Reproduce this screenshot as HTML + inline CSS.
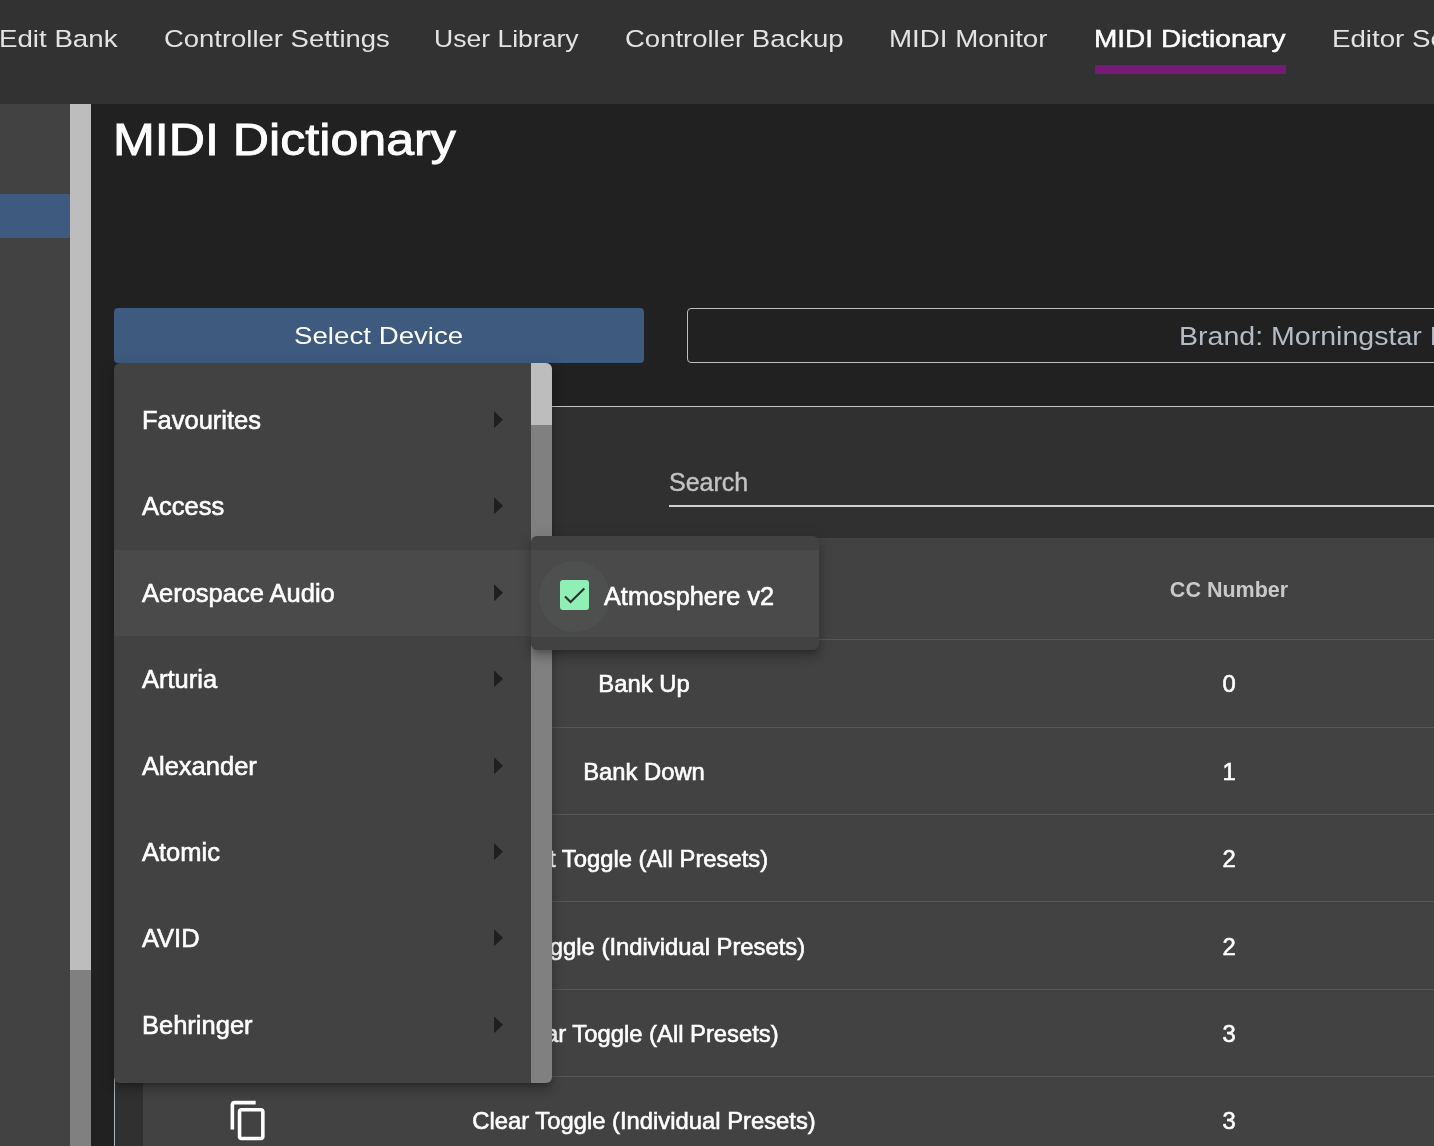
<!DOCTYPE html>
<html><head><meta charset="utf-8">
<style>
*{box-sizing:border-box;margin:0;padding:0}
html,body{width:1434px;height:1146px;overflow:hidden;background:#212121;font-family:"Liberation Sans",sans-serif;}
.abs{position:absolute}
.t{position:absolute;white-space:nowrap;line-height:normal;transform-origin:0 0;will-change:transform}
#nav{position:absolute;left:0;top:0;width:1434px;height:104px;background:#323232}
.nv{font-size:24.5px;color:#e3e3e3}
#side{position:absolute;left:0;top:104px;width:70px;height:1042px;background:#424242}
#sb1{position:absolute;left:70px;top:104px;width:21px;height:866px;background:#bdbdbd}
#sb2{position:absolute;left:70px;top:970px;width:21px;height:176px;background:#808080}
#btn{position:absolute;left:114px;top:308px;width:530px;height:55px;background:#3e5a7e;border-radius:4px}
#brand{position:absolute;left:687px;top:308px;width:800px;height:55px;border:1px solid #bdbdbd;border-radius:4px}
#panel{position:absolute;left:114px;top:406px;width:1400px;height:800px;background:#303030;border-top:1px solid #c4c4c4;border-left:1px solid #a9b2be}
#table{position:absolute;left:143px;top:538px;width:1400px;height:700px;background:#424242}
.rl{position:absolute;left:143px;width:1300px;height:1px;background:#575757}
#menu{position:absolute;left:114px;top:363px;width:438px;height:720px;background:#424242;border-radius:6px;box-shadow:0 5px 5px -3px rgba(0,0,0,.2),0 8px 10px 1px rgba(0,0,0,.14),0 3px 14px 2px rgba(0,0,0,.12);overflow:hidden}
#msb1{position:absolute;left:417px;top:0;width:21px;height:62px;background:#bdbdbd}
#msb2{position:absolute;left:417px;top:62px;width:21px;height:658px;background:#808080}
.mi{font-size:25.5px;color:#fff;-webkit-text-stroke:0.6px #fff}
.arr{position:absolute;left:494px;width:9px;height:17.6px}
#sub{position:absolute;left:531px;top:536px;width:288px;height:114px;background:#424242;border-radius:6px;box-shadow:0 5px 5px -3px rgba(0,0,0,.2),0 8px 10px 1px rgba(0,0,0,.14),0 3px 14px 2px rgba(0,0,0,.12);overflow:hidden}
.rt{font-size:23.8px;color:#fff;-webkit-text-stroke:0.6px #fff}
.c{text-align:center}
</style></head><body>
<div id="nav">
  <span class="t nv" style="left:-1px;top:25px;transform:scaleX(1.13)">Edit Bank</span>
  <span class="t nv" style="left:164px;top:25px;transform:scaleX(1.12)">Controller Settings</span>
  <span class="t nv" style="left:434px;top:25px;transform:scaleX(1.084)">User Library</span>
  <span class="t nv" style="left:625px;top:25px;transform:scaleX(1.122)">Controller Backup</span>
  <span class="t nv" style="left:889px;top:25px;transform:scaleX(1.13)">MIDI Monitor</span>
  <span class="t nv" style="left:1094px;top:25px;transform:scaleX(1.143);color:#fff;-webkit-text-stroke:0.5px #fff">MIDI Dictionary</span>
  <span class="t nv" style="left:1332px;top:25px;transform:scaleX(1.13)">Editor Settings</span>
  <div class="abs" style="left:1095px;top:65px;width:191px;height:9px;background:#761a78"></div>
</div>
<div id="side"><div class="abs" style="left:0;top:90px;width:70px;height:44px;background:#3e5a7e"></div></div>
<div id="sb1"></div><div id="sb2"></div>

<span class="t" style="left:113px;top:114px;font-size:45px;color:#fff;transform:scaleX(1.115);-webkit-text-stroke:0.9px #fff">MIDI Dictionary</span>

<div id="btn"></div>
<span class="t" style="left:294px;top:322px;font-size:24.5px;color:#fff;transform:scaleX(1.13)">Select Device</span>
<div id="brand"></div>
<span class="t" style="left:1179px;top:322px;font-size:25px;color:#b5bbc5;transform:scaleX(1.142)">Brand: Morningstar Engineering</span>

<div id="panel"></div>
<span class="t" style="left:669px;top:468px;font-size:25px;color:#c2c2c2;-webkit-text-stroke:0.4px #c2c2c2">Search</span>
<div class="abs" style="left:669px;top:505px;width:800px;height:2px;background:#d0d0d0"></div>

<div id="table"></div>
<div class="t c" style="left:1129px;width:200px;top:578px;font-size:21.5px;font-weight:700;color:#c9c9c9">CC Number</div>
<div class="rl" style="top:639px"></div>
<div class="rl" style="top:727px"></div>
<div class="rl" style="top:814px"></div>
<div class="rl" style="top:901px"></div>
<div class="rl" style="top:989px"></div>
<div class="rl" style="top:1076px"></div>

<div class="t rt c" style="left:344px;width:600px;top:670px">Bank Up</div>
<div class="t rt c" style="left:344px;width:600px;top:758px">Bank Down</div>
<div class="t rt c" style="left:344px;width:600px;top:845px">Set Toggle (All Presets)</div>
<div class="t rt c" style="left:344px;width:600px;top:933px">Set Toggle (Individual Presets)</div>
<div class="t rt c" style="left:344px;width:600px;top:1020px">Clear Toggle (All Presets)</div>
<div class="t rt c" style="left:344px;width:600px;top:1107px">Clear Toggle (Individual Presets)</div>
<div class="t rt c" style="left:1129px;width:200px;top:670px">0</div>
<div class="t rt c" style="left:1129px;width:200px;top:758px">1</div>
<div class="t rt c" style="left:1129px;width:200px;top:845px">2</div>
<div class="t rt c" style="left:1129px;width:200px;top:933px">2</div>
<div class="t rt c" style="left:1129px;width:200px;top:1020px">3</div>
<div class="t rt c" style="left:1129px;width:200px;top:1107px">3</div>
<svg class="abs" style="left:227px;top:1099px" width="43" height="43" viewBox="0 0 24 24"><path fill="#fff" d="M16 1H4c-1.1 0-2 .9-2 2v14h2V3h12V1zm3 4H8c-1.1 0-2 .9-2 2v14c0 1.1.9 2 2 2h11c1.1 0 2-.9 2-2V7c0-1.1-.9-2-2-2zm0 16H8V7h11v14z"/></svg>

<div id="menu">
  <div class="abs" style="left:0;top:187px;width:417px;height:86px;background:#4a4a4a"></div>
  <div id="msb1"></div><div id="msb2"></div>
</div>
<span class="t mi" style="left:142px;top:406px">Favourites</span>
<span class="t mi" style="left:142px;top:492px">Access</span>
<span class="t mi" style="left:142px;top:579px">Aerospace Audio</span>
<span class="t mi" style="left:142px;top:665px">Arturia</span>
<span class="t mi" style="left:142px;top:752px">Alexander</span>
<span class="t mi" style="left:142px;top:838px">Atomic</span>
<span class="t mi" style="left:142px;top:924px">AVID</span>
<span class="t mi" style="left:142px;top:1011px">Behringer</span>
<svg class="arr" style="top:411px" viewBox="0 0 9 17"><path d="M0 0L9 8.5L0 17Z" fill="#1f1f1f"/></svg>
<svg class="arr" style="top:497px" viewBox="0 0 9 17"><path d="M0 0L9 8.5L0 17Z" fill="#1f1f1f"/></svg>
<svg class="arr" style="top:584px" viewBox="0 0 9 17"><path d="M0 0L9 8.5L0 17Z" fill="#1f1f1f"/></svg>
<svg class="arr" style="top:670px" viewBox="0 0 9 17"><path d="M0 0L9 8.5L0 17Z" fill="#1f1f1f"/></svg>
<svg class="arr" style="top:757px" viewBox="0 0 9 17"><path d="M0 0L9 8.5L0 17Z" fill="#1f1f1f"/></svg>
<svg class="arr" style="top:843px" viewBox="0 0 9 17"><path d="M0 0L9 8.5L0 17Z" fill="#1f1f1f"/></svg>
<svg class="arr" style="top:929px" viewBox="0 0 9 17"><path d="M0 0L9 8.5L0 17Z" fill="#1f1f1f"/></svg>
<svg class="arr" style="top:1016px" viewBox="0 0 9 17"><path d="M0 0L9 8.5L0 17Z" fill="#1f1f1f"/></svg>

<div id="sub">
  <div class="abs" style="left:0;top:14px;width:288px;height:87px;background:#4a4a4a"></div>
  <div class="abs" style="left:8px;top:25px;width:71px;height:71px;border-radius:50%;background:#4e504f"></div>
  <div class="abs" style="left:29px;top:44px;width:29px;height:30px;border-radius:3px;background:#8fefb5"></div>
  <svg class="abs" style="left:29px;top:44px" width="29" height="30" viewBox="0 0 29 30"><path d="M5 16.4L10.6 22L24.3 8.4" fill="none" stroke="#2e2e2e" stroke-width="2.1"/></svg>
</div>
<span class="t mi" style="left:604px;top:582px;font-size:25.3px">Atmosphere v2</span>
</body></html>
